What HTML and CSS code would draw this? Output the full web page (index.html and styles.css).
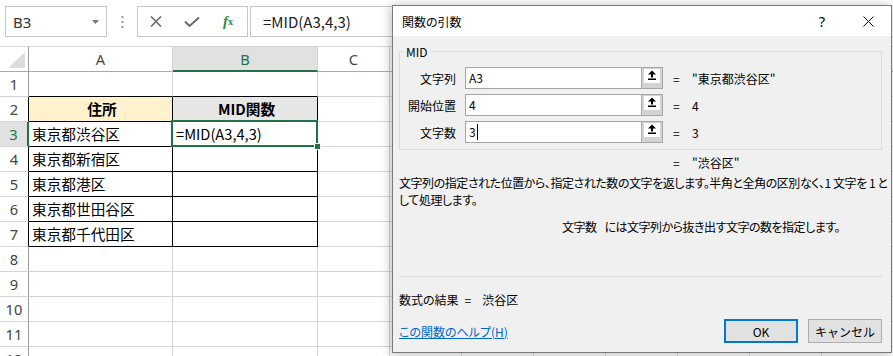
FILE: index.html
```html
<!DOCTYPE html>
<html lang="ja">
<head>
    <meta charset="UTF-8">
    <title>関数の引数</title>
    <link rel="stylesheet" href="styles.css">
</head>
<body>
    <div class="toolbar">
        <div class="namebox">
            <span>B3</span>
            <svg width="7" height="4" viewBox="0 0 7 4"><path d="M0 0h7L3.5 4z" fill="#777"/></svg>
        </div>
        <div class="grip">
            <svg width="3" height="14" viewBox="0 0 3 14"><rect x="0.5" y="1" width="2" height="2" fill="#9a9a9a"/><rect x="0.5" y="6" width="2" height="2" fill="#9a9a9a"/><rect x="0.5" y="11" width="2" height="2" fill="#9a9a9a"/></svg>
        </div>
        <div class="fbtns">
            <span class="fb"><svg width="12" height="11" viewBox="0 0 12 11"><path d="M1 0.5l10 10M11 0.5l-10 10" stroke="#6b6b6b" stroke-width="1.6"/></svg></span>
            <span class="fb"><svg width="16" height="10" viewBox="0 0 16 10"><path d="M1 4.5l4.5 4.5L15 0.5" stroke="#6b6b6b" stroke-width="2" fill="none"/></svg></span>
            <span class="fb fx"><i>f</i><sub>x</sub></span>
        </div>
        <div class="fbox">=MID(A3,4,3)</div>
    </div>

    <div class="sheet">
        <div class="row hdr">
            <div class="rh corner"><span class="tri"></span></div>
            <div class="ca">A</div>
            <div class="cb sel">B</div>
            <div class="cc">C</div>
            <div class="rest"></div>
        </div>
        <div class="row">
            <div class="rh">1</div>
            <div class="ca top"></div>
            <div class="cb top"></div>
            <div class="cc"></div>
            <div class="rest"></div>
        </div>
        <div class="row">
            <div class="rh tb">2</div>
            <div class="ca t head-a">住所</div>
            <div class="cb t head-b">MID関数</div>
            <div class="cc"></div>
            <div class="rest"></div>
        </div>
        <div class="row">
            <div class="rh sel">3</div>
            <div class="ca t">東京都渋谷区</div>
            <div class="cb t active">=MID(A3,4,3)<span class="selbox"><span class="handle"></span></span></div>
            <div class="cc"></div>
            <div class="rest"></div>
        </div>
        <div class="row">
            <div class="rh tb">4</div>
            <div class="ca t">東京都新宿区</div>
            <div class="cb t"></div>
            <div class="cc"></div>
            <div class="rest"></div>
        </div>
        <div class="row">
            <div class="rh tb">5</div>
            <div class="ca t">東京都港区</div>
            <div class="cb t"></div>
            <div class="cc"></div>
            <div class="rest"></div>
        </div>
        <div class="row">
            <div class="rh tb">6</div>
            <div class="ca t">東京都世田谷区</div>
            <div class="cb t"></div>
            <div class="cc"></div>
            <div class="rest"></div>
        </div>
        <div class="row">
            <div class="rh tb">7</div>
            <div class="ca t">東京都千代田区</div>
            <div class="cb t"></div>
            <div class="cc"></div>
            <div class="rest"></div>
        </div>
        <div class="row">
            <div class="rh">8</div>
            <div class="ca"></div>
            <div class="cb"></div>
            <div class="cc"></div>
            <div class="rest"></div>
        </div>
        <div class="row">
            <div class="rh">9</div>
            <div class="ca"></div>
            <div class="cb"></div>
            <div class="cc"></div>
            <div class="rest"></div>
        </div>
        <div class="row">
            <div class="rh">10</div>
            <div class="ca"></div>
            <div class="cb"></div>
            <div class="cc"></div>
            <div class="rest"></div>
        </div>
        <div class="row">
            <div class="rh">11</div>
            <div class="ca"></div>
            <div class="cb"></div>
            <div class="cc"></div>
            <div class="rest"></div>
        </div>
        <div class="row">
            <div class="rh">12</div>
            <div class="ca"></div>
            <div class="cb"></div>
            <div class="cc"></div>
            <div class="rest"></div>
        </div>
    </div>

    <div class="dialog">
        <div class="titlebar">
            <span class="title">関数の引数</span>
            <span class="tbtn">?</span>
            <span class="tbtn"><svg width="11" height="11" viewBox="0 0 11 11"><path d="M0.5 0.5l10 10M10.5 0.5l-10 10" stroke="#111" stroke-width="1"/></svg></span>
        </div>
        <div class="dbody">
            <fieldset class="args">
                <legend>MID</legend>
                <div class="arg">
                    <label>文字列</label>
                    <div class="field"><span class="val">A3</span><span class="ref"><span class="face"><svg width="16" height="13" viewBox="0 0 16 13"><path d="M4 5.5L8 1.5L12 5.5z" fill="#000"/><rect x="7" y="5" width="2" height="3.5" fill="#000"/><rect x="4" y="9.5" width="8" height="1.5" fill="#000"/></svg></span></span></div>
                    <span class="eq">=</span>
                    <span class="res">"東京都渋谷区"</span>
                </div>
                <div class="arg">
                    <label>開始位置</label>
                    <div class="field"><span class="val">4</span><span class="ref"><span class="face"><svg width="16" height="13" viewBox="0 0 16 13"><path d="M4 5.5L8 1.5L12 5.5z" fill="#000"/><rect x="7" y="5" width="2" height="3.5" fill="#000"/><rect x="4" y="9.5" width="8" height="1.5" fill="#000"/></svg></span></span></div>
                    <span class="eq">=</span>
                    <span class="res">4</span>
                </div>
                <div class="arg">
                    <label>文字数</label>
                    <div class="field"><span class="val">3<span class="caret"></span></span><span class="ref"><span class="face"><svg width="16" height="13" viewBox="0 0 16 13"><path d="M4 5.5L8 1.5L12 5.5z" fill="#000"/><rect x="7" y="5" width="2" height="3.5" fill="#000"/><rect x="4" y="9.5" width="8" height="1.5" fill="#000"/></svg></span></span></div>
                    <span class="eq">=</span>
                    <span class="res">3</span>
                </div>
            </fieldset>
            <div class="result"><span class="eq">=</span><span>"渋谷区"</span></div>
            <p class="desc">文字列の指定された位置から、指定された数の文字を返します。半角と全角の区別なく、1 文字を 1 と<br>して処理します。</p>
            <p class="argdesc"><span class="argname">文字数</span>には文字列から抜き出す文字の数を指定します。</p>
            <div class="formula"><span>数式の結果</span><span class="feq">=</span><span>渋谷区</span></div>
            <div class="footer">
                <a class="help" href="#">この関数のヘルプ(H)</a>
                <button class="btn ok">OK</button>
                <button class="btn">キャンセル</button>
            </div>
        </div>
    </div>
</body>
</html>
```

FILE: styles.css
```css
body {
    margin: 0;
    width: 893px;
    height: 356px;
    overflow: hidden;
    position: relative;
    background: #fff;
    font-family: "Noto Sans", "Noto Sans CJK JP", sans-serif;
}

/* formula bar */
.toolbar {
    display: flex;
    height: 47px;
    box-sizing: border-box;
    padding: 6px 0 0 5px;
    border-bottom: 1px solid #d4d4d4;
}
.namebox {
    width: 102px;
    height: 31px;
    box-sizing: border-box;
    border: 1px solid #c6c6c6;
    display: flex;
    align-items: center;
    justify-content: space-between;
    padding: 0 7px 0 7px;
    font-size: 15px;
    color: #333;
}
.grip {
    width: 30px;
    height: 31px;
    display: flex;
    align-items: center;
    justify-content: center;
}
.fbtns {
    width: 111px;
    height: 31px;
    box-sizing: border-box;
    border: 1px solid #c6c6c6;
    display: flex;
}
.fb {
    width: 36px;
    display: flex;
    align-items: center;
    justify-content: center;
}
.fx {
    color: #2f8a4f;
    font-family: "Liberation Serif", serif;
    font-weight: bold;
    font-size: 15px;
}
.fx sub {
    font-size: 10px;
    vertical-align: -1px;
}
.fbox {
    flex: 1;
    height: 31px;
    box-sizing: border-box;
    margin-left: 2px;
    border: 1px solid #c6c6c6;
    border-right: none;
    padding-left: 12px;
    font-family: "Noto Sans CJK JP", sans-serif;
    font-size: 15px;
    line-height: 29px;
    color: #222;
}

/* sheet */
.row {
    display: flex;
    height: 25px;
}
.row > div {
    box-sizing: border-box;
    height: 25px;
    border-right: 1px solid #d4d4d4;
    border-bottom: 1px solid #d4d4d4;
    font-family: "Noto Sans CJK JP", sans-serif;
    font-size: 14.67px;
    line-height: 24px;
    padding-left: 3px;
    white-space: nowrap;
    color: #000;
}
.row > .rh {
    width: 29px;
    padding: 0;
    text-align: center;
    color: #444;
    border-right-color: #9b9b9b;
    font-family: "Noto Sans", sans-serif;
}
.row > .ca { width: 144px; }
.row > .cb { width: 145px; }
.row > .cc { width: 72px; }
.row > .rest {
    flex: 1;
    border-right: none;
    background: repeating-linear-gradient(to right, transparent 0 71px, #d4d4d4 71px 72px);
}
.hdr > div {
    text-align: center;
    padding: 0;
    color: #444;
    font-family: "Noto Sans", sans-serif;
    border-bottom-color: #ababab;
}
.corner {
    position: relative;
}
.tri {
    position: absolute;
    right: 3px;
    bottom: 3px;
    width: 0;
    height: 0;
    border-left: 17px solid transparent;
    border-bottom: 16px solid #dcdcdc;
}
.hdr > .sel {
    background: #e1e1e1;
    color: #217346;
    border-bottom: 2px solid #217346;
}
.row > .rh.sel {
    background: #e1e1e1;
    color: #217346;
    border-right: 2px solid #217346;
}
.row > .rh.tb { border-right-color: #000; }
.row > .top { border-bottom-color: #000; }
.row > .t {
    border-right-color: #000;
    border-bottom-color: #000;
}
.head-a,
.head-b {
    font-weight: bold;
    text-align: center;
}
.row > .head-a { background: #fff2cc; }
.row > .head-b { background: #e7e6e6; }
.active {
    position: relative;
}
.selbox {
    position: absolute;
    top: -2px;
    left: -2px;
    right: -1px;
    bottom: -1px;
    border: 2px solid #217346;
}
.handle {
    position: absolute;
    right: -5px;
    bottom: -5px;
    width: 5px;
    height: 5px;
    background: #217346;
    border: 1px solid #fff;
}

/* dialog */
.dialog {
    position: absolute;
    left: 392px;
    top: 5px;
    width: 500px;
    box-sizing: border-box;
    border: 1px solid #7a7a7a;
    background: #f0f0f0;
    box-shadow: -1px 1px 10px rgba(0, 0, 0, 0.28);
    font-family: "Noto Sans CJK JP", sans-serif;
    font-size: 12px;
    font-feature-settings: "palt";
    color: #000;
}
.titlebar {
    height: 30px;
    background: #fff;
    display: flex;
    align-items: center;
    padding-left: 9px;
}
.title {
    flex: 1;
}
.tbtn {
    width: 46px;
    height: 30px;
    display: flex;
    align-items: center;
    justify-content: center;
    font-family: "Noto Sans", sans-serif;
    font-size: 14px;
}
.dbody {
    padding: 7px 9px 9px 6px;
}
.args {
    margin: 0;
    padding: 7px 0 6px 0;
    border: 1px solid #dcdcdc;
    min-width: 0;
}
.args legend {
    margin-left: 4px;
    padding: 0 2px;
    line-height: 17px;
}
.arg {
    display: flex;
    align-items: center;
    height: 22px;
}
.arg + .arg {
    margin-top: 5px;
}
.arg label {
    width: 56px;
    margin-right: 9px;
    text-align: right;
}
.field {
    width: 198px;
    height: 22px;
    box-sizing: border-box;
    border: 1px solid #a5a5a5;
    background: #fff;
    display: flex;
}
.val {
    flex: 1;
    padding-left: 3px;
    line-height: 20px;
    display: flex;
    align-items: center;
}
.caret {
    display: inline-block;
    width: 1px;
    height: 16px;
    background: #000;
    margin-left: 1px;
}
.ref {
    width: 21px;
    box-sizing: border-box;
    border-left: 1px solid #a9a9a9;
    background: #d3d3d3;
    padding: 1px 2px 0 2px;
}
.face {
    display: block;
    width: 16px;
    height: 14px;
    background: #fff;
}
.face svg {
    display: block;
}
.eq {
    display: inline-block;
    width: 19px;
    margin-left: 10px;
}
.result {
    margin-top: 4px;
    padding-left: 264px;
    line-height: 17px;
}
.desc {
    margin: 3px 0 0;
    line-height: 17px;
    letter-spacing: -0.45px;
    white-space: nowrap;
}
.argdesc {
    margin: 10px 0 0;
    padding-left: 163px;
    line-height: 17px;
    letter-spacing: -0.5px;
}
.argname {
    margin-right: 8px;
}
.formula {
    margin-top: 41px;
    border-top: 1px solid #d9d9d9;
    padding-top: 14px;
    line-height: 17px;
}
.feq {
    margin: 0 11px 0 6px;
}
.footer {
    margin-top: 11px;
    display: flex;
    align-items: center;
}
.help {
    margin-right: auto;
    color: #0066cc;
}
.btn {
    width: 74px;
    height: 24px;
    box-sizing: border-box;
    border: 1px solid #adadad;
    background: #e1e1e1;
    font-family: inherit;
    font-size: 12px;
    padding: 0;
    margin-left: 10px;
}
.btn.ok {
    border: 2px solid #0078d7;
}
```
